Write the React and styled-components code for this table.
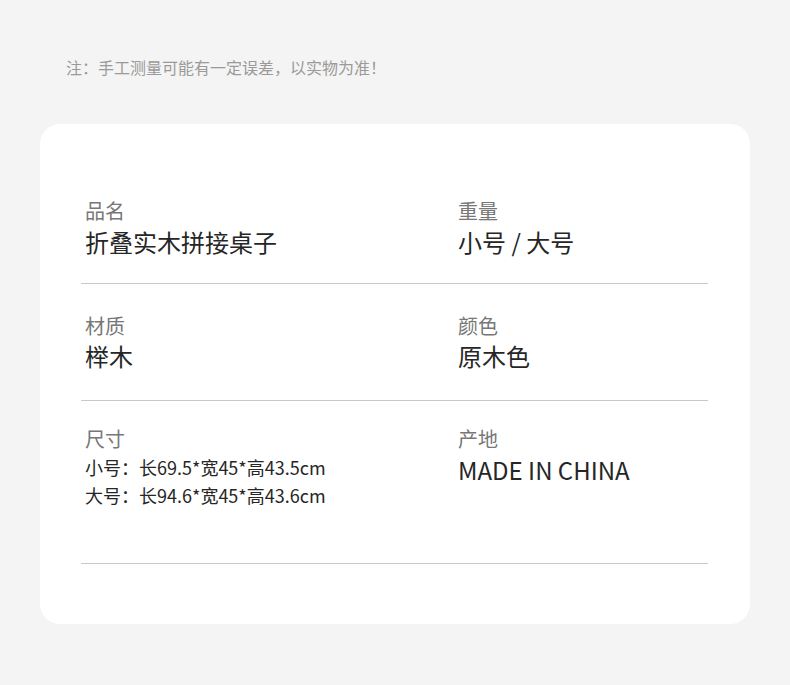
import React from "react";
import styled, { createGlobalStyle } from "styled-components";

const GlobalStyle = createGlobalStyle`
  body {
    margin: 0;
    background: #f4f4f4;
    font-family: "Noto Sans CJK SC", "Noto Sans", sans-serif;
  }
`;

const Page = styled.div`
  width: 790px;
  height: 685px;
  padding: 56px 40px 0;
  box-sizing: border-box;
`;

const Note = styled.p`
  margin: 0 0 0 26px;
  font-size: 16px;
  line-height: 22px;
  color: #9a9a9a;
`;

const Card = styled.div`
  margin-top: 46px;
  height: 500px;
  background: #fff;
  border-radius: 20px;
  padding: 75px 42px 0 41px;
  box-sizing: border-box;
`;

const Row = styled.div`
  display: grid;
  grid-template-columns: 373px 1fr;
  padding: ${(p) => p.$pad};
  padding-left: 4px;
  border-bottom: 1px solid #c8c8c8;
`;

const Cell = styled.div`
  display: flex;
  flex-direction: column;
  gap: ${(p) => p.$gap || 4}px;
`;

const Label = styled.div`
  font-size: 20px;
  line-height: 24px;
  color: #777;
`;

const Value = styled.div`
  font-size: 24px;
  line-height: 30px;
  color: #262626;
`;

const SizeLines = styled.div`
  font-size: 18px;
  line-height: 28px;
  color: #262626;
`;

const items = [
  { pad: "0 0 26px", gap: 4, left: ["品名", "折叠实木拼接桌子"], right: ["重量", "小号 / 大号"] },
  { pad: "30px 0 29px", gap: 3, left: ["材质", "榉木"], right: ["颜色", "原木色"] },
];

export default function App() {
  return (
    <>
      <GlobalStyle />
      <Page>
        <Note>注：手工测量可能有一定误差，以实物为准！</Note>
        <Card>
          {items.map((it) => (
            <Row key={it.left[0]} $pad={it.pad}>
              <Cell $gap={it.gap}>
                <Label>{it.left[0]}</Label>
                <Value>{it.left[1]}</Value>
              </Cell>
              <Cell $gap={it.gap}>
                <Label>{it.right[0]}</Label>
                <Value>{it.right[1]}</Value>
              </Cell>
            </Row>
          ))}
          <Row $pad="26px 0 54px">
            <Cell $gap={2}>
              <Label>尺寸</Label>
              <SizeLines>
                小号：长69.5*宽45*高43.5cm
                <br />
                大号：长94.6*宽45*高43.6cm
              </SizeLines>
            </Cell>
            <Cell $gap={4}>
              <Label>产地</Label>
              <Value>MADE IN CHINA</Value>
            </Cell>
          </Row>
        </Card>
      </Page>
    </>
  );
}
